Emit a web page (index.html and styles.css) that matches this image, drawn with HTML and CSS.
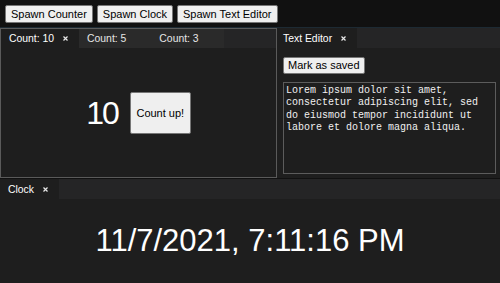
FILE: index.html
```html
<!DOCTYPE html>
<html>
<head>
<meta charset="utf-8">
<link rel="stylesheet" href="styles.css">
</head>
<body>
<div class="toolbar">
  <button class="btn">Spawn Counter</button>
  <button class="btn">Spawn Clock</button>
  <button class="btn">Spawn Text Editor</button>
</div>
<div class="dock">
  <div class="top-row">
    <div class="group group-focused">
      <div class="tabbar">
        <div class="tab tab-active"><span class="tab-label">Count: 10</span><svg class="close" width="5" height="5" viewBox="0 0 5 5"><path d="M0.5 0.5L4.5 4.5M4.5 0.5L0.5 4.5"/></svg></div>
        <div class="tab"><span class="tab-label">Count: 5</span><svg class="close hidden" width="5" height="5" viewBox="0 0 5 5"><path d="M0.5 0.5L4.5 4.5M4.5 0.5L0.5 4.5"/></svg></div>
        <div class="tab"><span class="tab-label">Count: 3</span><svg class="close hidden" width="5" height="5" viewBox="0 0 5 5"><path d="M0.5 0.5L4.5 4.5M4.5 0.5L0.5 4.5"/></svg></div>
      </div>
      <div class="content counter">
        <span class="count">10</span>
        <button class="btn count-btn">Count up!</button>
      </div>
    </div>
    <div class="group group-right">
      <div class="tabbar">
        <div class="tab tab-active"><span class="tab-label">Text Editor</span><svg class="close" width="5" height="5" viewBox="0 0 5 5"><path d="M0.5 0.5L4.5 4.5M4.5 0.5L0.5 4.5"/></svg></div>
      </div>
      <div class="content editor">
        <div class="editor-bar"><button class="btn save-btn">Mark as saved</button></div>
        <textarea class="textarea" spellcheck="false">Lorem ipsum dolor sit amet, consectetur adipiscing elit, sed do eiusmod tempor incididunt ut labore et dolore magna aliqua.</textarea>
      </div>
    </div>
  </div>
  <div class="group group-bottom">
    <div class="tabbar">
      <div class="tab tab-active"><span class="tab-label">Clock</span><svg class="close" width="5" height="5" viewBox="0 0 5 5"><path d="M0.5 0.5L4.5 4.5M4.5 0.5L0.5 4.5"/></svg></div>
    </div>
    <div class="content clock">11/7/2021, 7:11:16 PM</div>
  </div>
</div>
</body>
</html>
```

FILE: styles.css
```css
html, body {
  margin: 0;
  padding: 0;
}
body {
  width: 500px;
  height: 283px;
  overflow: hidden;
  background: #111111;
  font-family: "Liberation Sans", Arial, sans-serif;
  display: flex;
  flex-direction: column;
}
.toolbar {
  display: flex;
  gap: 4px;
  padding: 5px 5px 4px 5px;
  height: 18px;
}
.btn {
  font-family: "Liberation Sans", Arial, sans-serif;
  font-size: 11px;
  color: #000;
  background: #efefef;
  border: 1px solid #767676;
  border-radius: 2px;
  padding: 0 5px;
  height: 18px;
  margin: 0;
  line-height: 16px;
}
.dock {
  flex: 1;
  border-top: 1px solid #1d2a33;
  display: flex;
  flex-direction: column;
  min-height: 0;
}
.top-row {
  height: 150px;
  display: flex;
}
.group {
  display: flex;
  flex-direction: column;
  background: #1e1e1e;
  min-width: 0;
}
.group-focused {
  width: 277px;
  box-sizing: border-box;
  border: 1px solid #5a5a5a;
}
.group-right {
  flex: 1;
}
.group-bottom {
  margin-top: 1px;
  flex: 1;
}
.tabbar {
  display: flex;
  height: 20px;
  background: #252526;
  flex: none;
}
.group-focused .tabbar {
  height: 19px;
}
.tab {
  display: flex;
  align-items: center;
  padding: 0 11px 0 8px;
  background: #2a2a2a;
  color: #e6e6e6;
  font-size: 10.4px;
}
.group-right .tab {
  padding-left: 6px;
}
.tab-active {
  background: #1e1e1e;
  color: #ffffff;
}
.close {
  margin-left: 9px;
  stroke: #e8e8e8;
  stroke-width: 1.2;
  fill: none;
}
.close.hidden {
  visibility: hidden;
}
.content {
  flex: 1;
  min-height: 0;
}
.counter {
  display: flex;
  align-items: center;
  justify-content: center;
  gap: 12px;
}
.count {
  color: #ffffff;
  font-size: 32px;
  letter-spacing: -2px;
  line-height: 1;
}
.count-btn {
  width: 61px;
  height: 42px;
  padding: 0;
}
.editor {
  display: flex;
  flex-direction: column;
  padding: 9px 4px 4px 6px;
  gap: 8px;
}
.editor-bar {
  display: flex;
}
.save-btn {
  height: 17px;
  line-height: 15px;
  padding: 0 4px;
}
.textarea {
  flex: 1;
  margin: 0;
  resize: none;
  background: #1e1e1e;
  color: #f0f0f0;
  border: 1px solid #5c5c5c;
  font-family: "Liberation Mono", "DejaVu Sans Mono", monospace;
  font-size: 10px;
  line-height: 12.3px;
  padding: 2px 2px;
  outline: none;
}
.clock {
  display: flex;
  align-items: center;
  justify-content: center;
  color: #ffffff;
  font-size: 31px;
}
```
